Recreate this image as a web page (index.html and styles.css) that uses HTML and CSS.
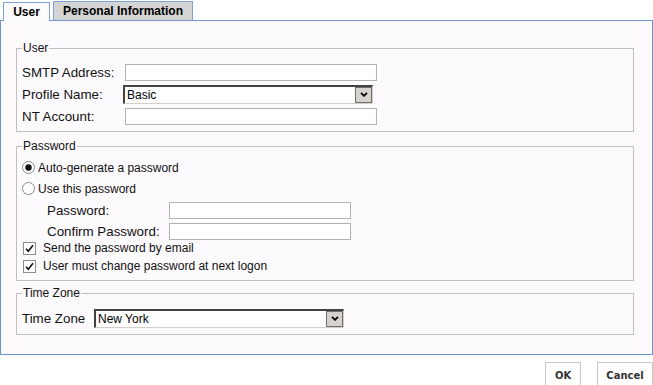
FILE: index.html
```html
<!DOCTYPE html>
<html>
<head>
<meta charset="utf-8">
<link rel="stylesheet" href="styles.css">
</head>
<body>
<div class="tabs">
  <div class="tab tab-active">User</div>
  <div class="tab tab-inactive">Personal Information</div>
</div>
<div class="panel">
  <fieldset class="group group-user">
    <legend>User</legend>
    <div class="rows rows-user">
      <div class="row h22"><span class="lbl w103">SMTP Address:</span><span class="field w252"></span></div>
      <div class="row h22"><span class="lbl w101">Profile Name:</span>
        <div class="select w250"><span class="sel-text">Basic</span><span class="sel-btn"><svg width="8" height="5" viewBox="0 0 8 5"><path d="M1 0.8 L4 3.8 L7 0.8" fill="none" stroke="#000" stroke-width="1.8"/></svg></span></div>
      </div>
      <div class="row h22"><span class="lbl w103">NT Account:</span><span class="field w252"></span></div>
    </div>
  </fieldset>

  <fieldset class="group group-pw">
    <legend>Password</legend>
    <div class="rows rows-pw">
      <div class="row h21 small"><svg class="radio" width="13" height="13" viewBox="0 0 13 13"><circle cx="6.5" cy="6.5" r="6" fill="#fff" stroke="#8a8a8a"/><circle cx="6.5" cy="6.5" r="3.2" fill="#111"/></svg><span class="opt">Auto-generate a password</span></div>
      <div class="row h21 small"><svg class="radio" width="13" height="13" viewBox="0 0 13 13"><circle cx="6.5" cy="6.5" r="6" fill="#fff" stroke="#8a8a8a"/></svg><span class="opt">Use this password</span></div>
      <div class="row h22 indent"><span class="lbl w122">Password:</span><span class="field w182"></span></div>
      <div class="row h20 indent"><span class="lbl w122">Confirm Password:</span><span class="field w182"></span></div>
      <div class="row h18 small first-check"><svg class="check" width="13" height="13" viewBox="0 0 13 13"><rect x="0.5" y="0.5" width="12" height="12" fill="#fff" stroke="#8e8f8f"/><path d="M3 6.8 L5.3 9.3 L10 3.2" fill="none" stroke="#111" stroke-width="1.6"/></svg><span class="opt-check">Send the password by email</span></div>
      <div class="row h18 small"><svg class="check" width="13" height="13" viewBox="0 0 13 13"><rect x="0.5" y="0.5" width="12" height="12" fill="#fff" stroke="#8e8f8f"/><path d="M3 6.8 L5.3 9.3 L10 3.2" fill="none" stroke="#111" stroke-width="1.6"/></svg><span class="opt-check">User must change password at next logon</span></div>
    </div>
  </fieldset>

  <fieldset class="group group-tz">
    <legend>Time Zone</legend>
    <div class="rows rows-tz">
      <div class="row h24"><span class="lbl w72">Time Zone</span>
        <div class="select w250"><span class="sel-text">New York</span><span class="sel-btn"><svg width="8" height="5" viewBox="0 0 8 5"><path d="M1 0.8 L4 3.8 L7 0.8" fill="none" stroke="#000" stroke-width="1.8"/></svg></span></div>
      </div>
    </div>
  </fieldset>
</div>
<div class="actions">
  <button class="btn btn-ok">OK</button>
  <button class="btn btn-cancel">Cancel</button>
</div>
</body>
</html>
```

FILE: styles.css
```css
html, body {
  margin: 0;
  padding: 0;
  background: #ffffff;
}
body {
  width: 653px;
  font-family: "Liberation Sans", Arial, sans-serif;
  color: #000;
}
.tabs {
  display: flex;
  align-items: flex-end;
  height: 20px;
  padding-left: 3px;
  gap: 3px;
}
.tab {
  box-sizing: border-box;
  border: 1px solid #7ba2d9;
  border-bottom: none;
  font-weight: bold;
  font-size: 12px;
  line-height: 16px;
  color: #000;
}
.tab-active {
  position: relative;
  z-index: 1;
  width: 47px;
  height: 19px;
  margin-bottom: -1px;
  padding-top: 1px;
  text-align: center;
  background: #fdfafd;
}
.tab-inactive {
  height: 19px;
  padding: 1px 9px 0 9px;
  background: #d4d4d4;
}
.panel {
  box-sizing: border-box;
  width: 653px;
  height: 335px;
  border: 1px solid #6b97d5;
  background: #fdfafd;
  padding: 0 18px 0 15px;
  display: flex;
  flex-direction: column;
}
.group {
  margin: 0;
  border: 1px solid #c0c0c0;
  padding: 0 5px;
  min-width: 0;
}
.group legend {
  padding: 0 1px;
  font-size: 12px;
  line-height: 14px;
  color: #111;
}
.group-user { margin-top: 20px; padding-bottom: 4px; }
.group-pw { margin-top: 7px; padding-bottom: 5px; }
.group-tz { margin-top: 5px; padding-bottom: 4px; }
.rows-user { padding-top: 6px; }
.rows-pw { padding-top: 4px; }
.rows-tz { padding-top: 6px; }
.row {
  display: flex;
  align-items: center;
}
.h18 { height: 18px; }
.h20 { height: 20px; }
.h21 { height: 21px; }
.h22 { height: 22px; }
.h24 { height: 24px; }
.first-check { margin-top: -2px; }
.indent { padding-left: 25px; }
.lbl {
  font-size: 13.33px;
  flex: none;
  white-space: nowrap;
  color: #111;
}
.w72 { width: 72px; }
.w101 { width: 101px; }
.w103 { width: 103px; }
.w122 { width: 122px; }
.field {
  box-sizing: border-box;
  height: 17px;
  border: 1px solid #b3b3b3;
  background: #fff;
}
.w252 { width: 252px; }
.w250 { width: 250px; }
.w182 { width: 182px; }
.select {
  box-sizing: border-box;
  height: 19px;
  border-style: solid;
  border-width: 2px 1px 1px 2px;
  border-color: #424242 #d4d0c8 #d4d0c8 #424242;
  background: #fff;
  display: flex;
  align-items: center;
  justify-content: space-between;
}
.sel-text {
  font-size: 12px;
  padding-left: 2px;
  line-height: 14px;
}
.sel-btn {
  box-sizing: border-box;
  width: 17px;
  height: 16px;
  background: #d6d3ce;
  border: 1px solid #6e6e6e;
  display: flex;
  align-items: center;
  justify-content: center;
}
.small { font-size: 12px; color: #111; }
.radio { flex: none; }
.opt { margin-left: 3px; }
.check { flex: none; margin-left: 1px; }
.opt-check { margin-left: 7px; }
.actions {
  display: flex;
  justify-content: flex-end;
  gap: 16px;
  margin-top: 7px;
}
.btn {
  box-sizing: border-box;
  height: 24px;
  border: 1px solid #c9c9c9;
  background: #fff;
  font-family: "DejaVu Sans", Verdana, sans-serif;
  font-weight: bold;
  font-size: 10px;
  color: #333;
  padding: 2px 0 0 0;
  margin: 0;
}
.btn-ok { width: 36px; }
.btn-cancel { width: 56px; }
```
